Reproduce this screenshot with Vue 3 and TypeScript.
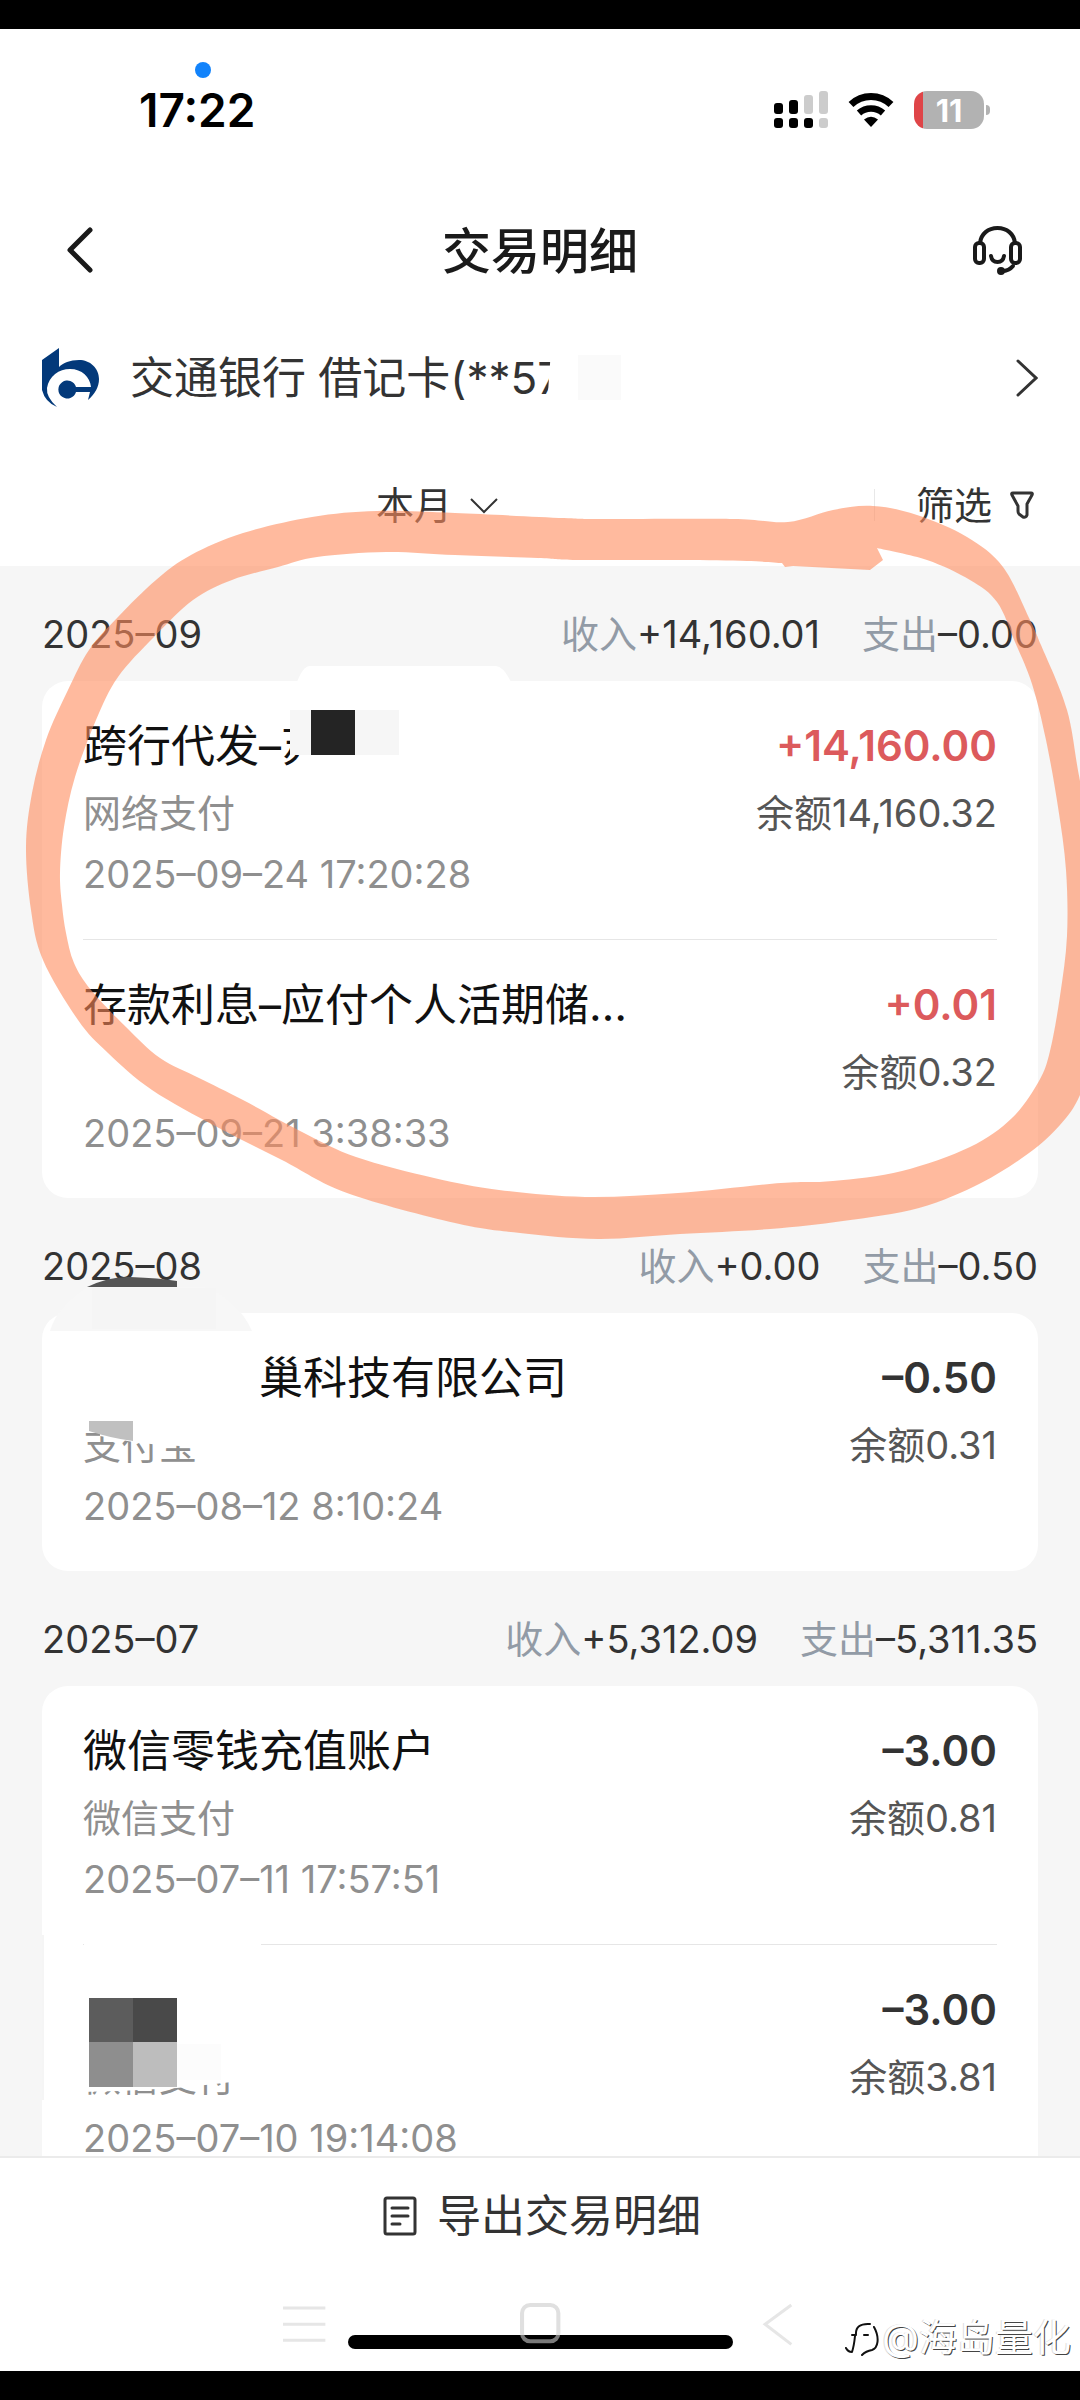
<script setup lang="ts">
type Point = [number, number]

interface Entry {
  title: string
  channel: string
  time: string
  amount: string
  balance: string
  income?: boolean
  redacted?: boolean
}

interface Month {
  label: string
  income: string
  expense: string
  entries: Entry[]
}

const months: Month[] = [
  {
    label: '2025–09',
    income: '+14,160.01',
    expense: '–0.00',
    entries: [
      { title: '跨行代发–苏', channel: '网络支付', time: '2025–09–24 17:20:28', amount: '+14,160.00', balance: '14,160.32', income: true },
      { title: '存款利息–应付个人活期储…', channel: '', time: '2025–09–21 3:38:33', amount: '+0.01', balance: '0.32', income: true },
    ],
  },
  {
    label: '2025–08',
    income: '+0.00',
    expense: '–0.50',
    entries: [
      { title: '巢科技有限公司', channel: '支付宝', time: '2025–08–12 8:10:24', amount: '–0.50', balance: '0.31', redacted: true },
    ],
  },
  {
    label: '2025–07',
    income: '+5,312.09',
    expense: '–5,311.35',
    entries: [
      { title: '微信零钱充值账户', channel: '微信支付', time: '2025–07–11 17:57:51', amount: '–3.00', balance: '0.81' },
      { title: '', channel: '微信支付', time: '2025–07–10 19:14:08', amount: '–3.00', balance: '3.81' },
    ],
  },
]

// Smooth curve through the points (Catmull-Rom converted to cubic Béziers).
function smooth(points: Point[], closed: boolean): string {
  const n = points.length
  const at = (i: number): Point => (closed ? points[(i + n) % n] : points[Math.max(0, Math.min(n - 1, i))])
  let d = `M${points[0][0]} ${points[0][1]}`
  const last = closed ? n : n - 1
  for (let i = 0; i < last; i++) {
    const [a, b, c, e] = [at(i - 1), at(i), at(i + 1), at(i + 2)]
    d += `C${(b[0] + (c[0] - a[0]) / 6).toFixed(1)} ${(b[1] + (c[1] - a[1]) / 6).toFixed(1)} `
    d += `${(c[0] - (e[0] - b[0]) / 6).toFixed(1)} ${(c[1] - (e[1] - b[1]) / 6).toFixed(1)} ${c[0]} ${c[1]}`
  }
  return d
}

const markerOuter: Point[] = [
  [377, 511], [312, 517], [243, 533], [191, 555], [156, 580], [118, 617], [89, 650], [68, 690], [46, 740], [32, 793],
  [26, 847], [31, 910], [43, 960], [78, 1020], [108, 1053], [152, 1090], [217, 1127], [282, 1160], [347, 1193],
  [455, 1223], [520, 1233], [598, 1239], [680, 1234], [770, 1229], [843, 1221], [919, 1208], [981, 1183], [1029, 1153],
  [1060, 1125], [1080, 1095], [1098, 1040], [1106, 960], [1100, 870], [1080, 781], [1067, 710], [1041, 645],
  [1030, 620], [1003, 567], [967, 537], [917, 515], [873, 506], [833, 510], [788, 522], [733, 519], [600, 519],
  [564, 518], [455, 513],
]

const markerInner: Point[] = [
  [782, 563], [747, 561], [680, 560], [577, 560], [538, 558], [455, 555], [386, 552], [317, 557], [278, 567],
  [232, 580], [193, 600], [154, 637], [118, 677], [96, 720], [75, 777], [64, 827], [60, 873], [62, 905], [66, 933],
  [74, 963], [91, 990], [126, 1027], [160, 1058], [199, 1078], [243, 1100], [304, 1133], [356, 1157], [434, 1178],
  [499, 1190], [585, 1197], [678, 1193], [781, 1183], [833, 1181], [902, 1171], [970, 1147], [1012, 1118],
  [1039, 1081], [1050, 1051], [1060, 996], [1067, 936], [1066, 870], [1058, 807], [1046, 740], [1032, 684],
  [1015, 642], [997, 602], [970, 580], [927, 560], [877, 548],
]

const markerPath = `${smooth(markerOuter, true)}Z${smooth(markerInner, false)}L883 560L870 570L793 566L785 567Z`
</script>

<template>
  <div class="screen">
    <div class="edge"></div>

    <div class="status">
      <div class="clock">17:22<i class="dot"></i></div>
      <div class="signals">
        <svg width="54" height="38" viewBox="0 0 54 38">
          <rect x="0" y="12" width="9" height="11" rx="3" />
          <rect x="15" y="9" width="9" height="14" rx="3" />
          <rect x="30" y="4" width="9" height="19" rx="3" fill="#ccc" />
          <rect x="45" y="0" width="9" height="23" rx="3" fill="#ccc" />
          <rect x="0" y="27" width="9" height="10" rx="3" />
          <rect x="15" y="27" width="9" height="10" rx="3" />
          <rect x="30" y="27" width="9" height="10" rx="3" />
          <rect x="45" y="27" width="9" height="10" rx="3" fill="#ccc" />
        </svg>
        <svg width="46" height="36" viewBox="0 0 46 36">
          <path d="M3 12.500A29 29 0 0 1 43 12.500" fill="none" stroke="#000" stroke-width="7" />
          <path d="M11 21A18 18 0 0 1 35 21" fill="none" stroke="#000" stroke-width="6.500" />
          <path d="M16 27.500Q23 22 30 27.500L23 35Z" />
        </svg>
        <div class="battery"><span>11</span></div>
      </div>
    </div>

    <header class="nav">
      <button aria-label="返回">
        <svg width="26" height="46" viewBox="0 0 26 46"><path d="M23 3L3 23L23 43" fill="none" stroke="#1a1a1a" stroke-width="5" stroke-linecap="round" stroke-linejoin="round" /></svg>
      </button>
      <h1 class="label">交易明细</h1>
      <button class="service" aria-label="客服">
        <svg width="49" height="49" viewBox="0 0 49 49" fill="none" stroke="#1a1a1a" stroke-width="4" stroke-linecap="round">
          <path d="M7 17C8 8 15 2 24.500 2S41 8 42 17" />
          <rect x="2" y="17" width="9" height="20" rx="4" />
          <rect x="38" y="17" width="9" height="20" rx="4" />
          <path d="M18 30Q19 36 24.500 36T31 30" />
          <path d="M40 40Q36 45 29 45" />
          <circle cx="28" cy="45" r="2" fill="#1a1a1a" />
        </svg>
      </button>
    </header>

    <button class="bank">
      <svg width="58" height="60" viewBox="0 0 58 60" fill="#03397a">
        <path d="M18 0L1 12V42Q4 54 16 59Q5 49 6 40C8 28 18 21 29 21C41 21 49 29 50 39H35A9 9 0 1 0 35 44H49L47 52C54 46 58 39 58 31C58 20 49 12 38 12C29 12 22 15 18 19Z" />
      </svg>
      <span class="label">交通银行 借记卡(**57</span>
      <svg width="22" height="38" viewBox="0 0 22 38"><path d="M2 2L20 19L2 36" fill="none" stroke="#333" stroke-width="3" stroke-linecap="round" /></svg>
    </button>

    <div class="filters">
      <button class="period">
        <span class="label">本月</span>
        <svg width="28" height="17" viewBox="0 0 28 17"><path d="M1 2L14 15L27 2" fill="none" stroke="#333" stroke-width="2" /></svg>
      </button>
      <button class="filter">
        <span class="label">筛选</span>
        <svg width="24" height="28" viewBox="0 0 24 28"><path d="M3 2H21Q23 2 22 4L17 13V24Q16 27 13 26L9 23Q8 22 8 20V15L2 4Q1 2 3 2Z" fill="none" stroke="#333" stroke-width="3" stroke-linejoin="round" /></svg>
      </button>
    </div>

    <main class="list">
      <section v-for="month in months" :key="month.label">
        <div class="month">
          <h2>{{ month.label }}</h2>
          <p><span>收入</span>{{ month.income }}</p>
          <p><span>支出</span>{{ month.expense }}</p>
        </div>
        <ul class="card">
          <li v-for="entry in month.entries" :key="entry.time">
            <div>
              <div class="title"><i v-if="entry.redacted" class="redacted"></i>{{ entry.title }}</div>
              <div class="channel">{{ entry.channel }}</div>
              <time>{{ entry.time }}</time>
            </div>
            <div class="figures">
              <div class="amount" :class="{ income: entry.income }">{{ entry.amount }}</div>
              <div class="balance">余额{{ entry.balance }}</div>
            </div>
          </li>
        </ul>
      </section>
    </main>

    <footer>
      <button class="export">
        <svg width="34" height="40" viewBox="0 0 34 40" fill="none" stroke="#333" stroke-width="3" stroke-linecap="round">
          <rect x="2" y="2" width="30" height="36" rx="2" />
          <path d="M9 12H25M9 20H25M9 28H17" />
        </svg>
        <span class="label">导出交易明细</span>
      </button>
      <div class="system">
        <div class="home"></div>
        <svg class="keys" viewBox="0 0 514 44" fill="none">
          <path d="M2 6H44M2 22H44M2 38H44" stroke="#e6e6e6" stroke-width="3" />
          <rect x="239" y="3" width="36" height="36" rx="8" stroke="#ccc" stroke-opacity=".6" stroke-width="4" />
          <path d="M506 3L480 22L506 42" stroke="#e6e6e6" stroke-width="3" />
        </svg>
      </div>
    </footer>
    <div class="edge"></div>

    <!-- privacy blocks and marker ring drawn over the page -->
    <svg class="overlay" viewBox="0 0 1080 2400">
      <path d="M551 350H621V406H547Z" fill="#fff" />
      <rect x="578" y="355" width="43" height="45" fill="#fafafa" />

      <path d="M297 682Q303 666 310 666H496Q503 666 511 682Z" fill="#fff" />
      <path d="M290 705V728L294 742L296 750L301 758V775H360V705Z" fill="#fff" />
      <rect x="290" y="710" width="109" height="45" fill="#f6f6f6" />
      <rect x="311" y="710" width="44" height="45" fill="#242424" />

      <path d="M87 1287Q110 1276 130 1277Q160 1278 177 1281V1287Z" fill="#555" />
      <path d="M50 1331Q58 1305 87 1287H205Q238 1300 252 1331Z" fill="#f7f7f7" />
      <rect x="92" y="1288" width="124" height="41" fill="#f5f5f5" />
      <path d="M100 1424H200V1447L160 1445L133 1442L100 1436Z" fill="#fff" />
      <path d="M89 1421H133V1441Q110 1438 89 1431Z" fill="#c0c0c0" />

      <rect x="42" y="1935" width="2" height="165" fill="#f5f5f5" />
      <rect x="84" y="1938" width="177" height="10" fill="#fff" />
      <path d="M80 2050H240V2081L215 2084L177 2088L120 2091L80 2092Z" fill="#fff" />
      <rect x="89" y="1998" width="44" height="44" fill="#5c5c5c" />
      <rect x="133" y="1998" width="44" height="44" fill="#494949" />
      <rect x="89" y="2042" width="44" height="45" fill="#8e8e8e" />
      <rect x="133" y="2042" width="44" height="45" fill="#bdbdbd" />
      <rect x="177" y="2044" width="44" height="36" fill="#fcfcfc" />

      <path :d="markerPath" fill="#ff8c5d" fill-opacity=".6" fill-rule="evenodd" />
    </svg>

    <div class="watermark">
      <svg width="38" height="38" viewBox="0 0 38 38" fill="none" stroke-linecap="round" stroke-linejoin="round">
        <path d="M2 30Q4 34 8 34Q10 28 11 18M8 17H12Q11 5 26 6M20 17H24M30 9C36 20 34 30 28 32Q22 33 18 37" stroke="#111" stroke-width="2" />
      </svg>
      <span>@海岛量化</span>
    </div>
  </div>
</template>

<style>
body {
  margin: 0;
}
</style>

<style scoped>
.screen {
  position: relative;
  display: flex;
  flex-direction: column;
  height: 100vh;
  overflow: hidden;
  background: #fff;
  color: #333;
  font-family: Inter, "Noto Sans CJK SC", sans-serif;
  font-size: 38px;
}

button {
  display: flex;
  align-items: center;
  padding: 0;
  border: 0;
  background: none;
  color: inherit;
  font: inherit;
}

svg {
  display: block;
  flex: none;
}

h1,
h2,
p,
ul {
  margin: 0;
  padding: 0;
  font-weight: 400;
  list-style: none;
}

.label {
  padding-bottom: 6px;
}

.edge {
  flex: none;
  height: 29px;
  background: #000;
}

.status {
  display: flex;
  flex: none;
  align-items: center;
  justify-content: space-between;
  height: 162px;
  padding: 0 90px 0 139px;
}

.clock {
  position: relative;
  color: #000;
  font-size: 46px;
  font-weight: 600;
}

.dot {
  position: absolute;
  top: -20px;
  left: 56px;
  width: 16px;
  height: 16px;
  border-radius: 50%;
  background: #1283fb;
}

.signals {
  display: flex;
  align-items: center;
  gap: 20px;
}

.battery {
  position: relative;
  display: flex;
  align-items: center;
  justify-content: center;
  width: 70px;
  height: 38px;
  margin-right: 6px;
  border-radius: 13px;
  background: linear-gradient(to right, #df4548 9px, #b2b2b2 9px);
  color: #fff;
  font-size: 31px;
  font-weight: 700;
}

.battery::after {
  content: "";
  position: absolute;
  top: 14px;
  right: -6px;
  width: 4px;
  height: 10px;
  border-radius: 0 4px 4px 0;
  background: #b2b2b2;
}

.nav {
  display: grid;
  flex: none;
  grid-template-columns: 1fr auto 1fr;
  align-items: center;
  height: 118px;
  padding: 0 58px;
}

.nav button {
  padding-left: 9px;
}

.nav .service {
  justify-self: end;
}

.nav h1 {
  color: #1a1a1a;
  font-size: 49px;
  font-weight: 500;
}

.bank {
  flex: none;
  gap: 31px;
  height: 138px;
  padding: 0 42px 0 41px;
  font-size: 44px;
  text-align: left;
}

.bank span {
  flex: 1;
}

.filters {
  display: flex;
  flex: none;
  align-items: center;
  height: 119px;
  padding-bottom: 3px;
  box-sizing: border-box;
}

.period {
  flex: 1;
  justify-content: center;
  gap: 18px;
}

.filter {
  gap: 18px;
  height: 32px;
  padding: 0 46px 0 41px;
  border-left: 1px solid #e8e8e8;
}

.list {
  flex: 1;
  min-height: 0;
  overflow: hidden;
  padding: 0 42px;
  background: #f6f6f6;
}

.month {
  display: flex;
  gap: 42px;
  padding: 39px 0 18px;
  line-height: 58px;
}

.month h2 {
  flex: 1;
  font-size: 38px;
}

.month span {
  color: #929ba6;
}

.card {
  border-radius: 26px;
  background: #fff;
  padding: 0 41px;
}

.card li {
  display: flex;
  justify-content: space-between;
  padding: 33px 0 48px;
}

.card li + li {
  border-top: 1px solid #e6e6e6;
}

.title {
  height: 64px;
  color: #111;
  font-size: 44px;
  line-height: 64px;
}

.redacted {
  display: inline-block;
  width: 4em;
}

.channel {
  height: 70px;
  color: #8f8f8f;
  line-height: 70px;
}

time {
  display: block;
  margin-top: 9px;
  color: #8f8f8f;
  line-height: 34px;
}

.figures {
  text-align: right;
}

.amount {
  font-size: 42px;
  font-weight: 600;
  line-height: 64px;
}

.income {
  color: #dc5a5c;
}

.balance {
  color: #555;
  line-height: 70px;
}

footer {
  flex: none;
  border-top: 2px solid #ebebeb;
}

.export {
  justify-content: center;
  gap: 20px;
  width: 100%;
  height: 116px;
  padding-left: 4px;
  font-size: 44px;
}

.system {
  position: relative;
  height: 97px;
  padding-top: 61px;
  box-sizing: border-box;
}

.home {
  width: 385px;
  height: 14px;
  margin: 0 auto;
  border-radius: 7px;
  background: #000;
}

.keys {
  position: absolute;
  top: 28px;
  left: 26%;
  width: 48%;
}

.overlay {
  position: absolute;
  top: 0;
  left: 0;
  width: 100%;
  pointer-events: none;
}

.watermark {
  position: absolute;
  right: 9px;
  bottom: 35px;
  display: flex;
  align-items: center;
  color: #fff;
  line-height: 56px;
  text-shadow: 1px 1px 0 #444, -1px 0 0 #ddd;
}
</style>
